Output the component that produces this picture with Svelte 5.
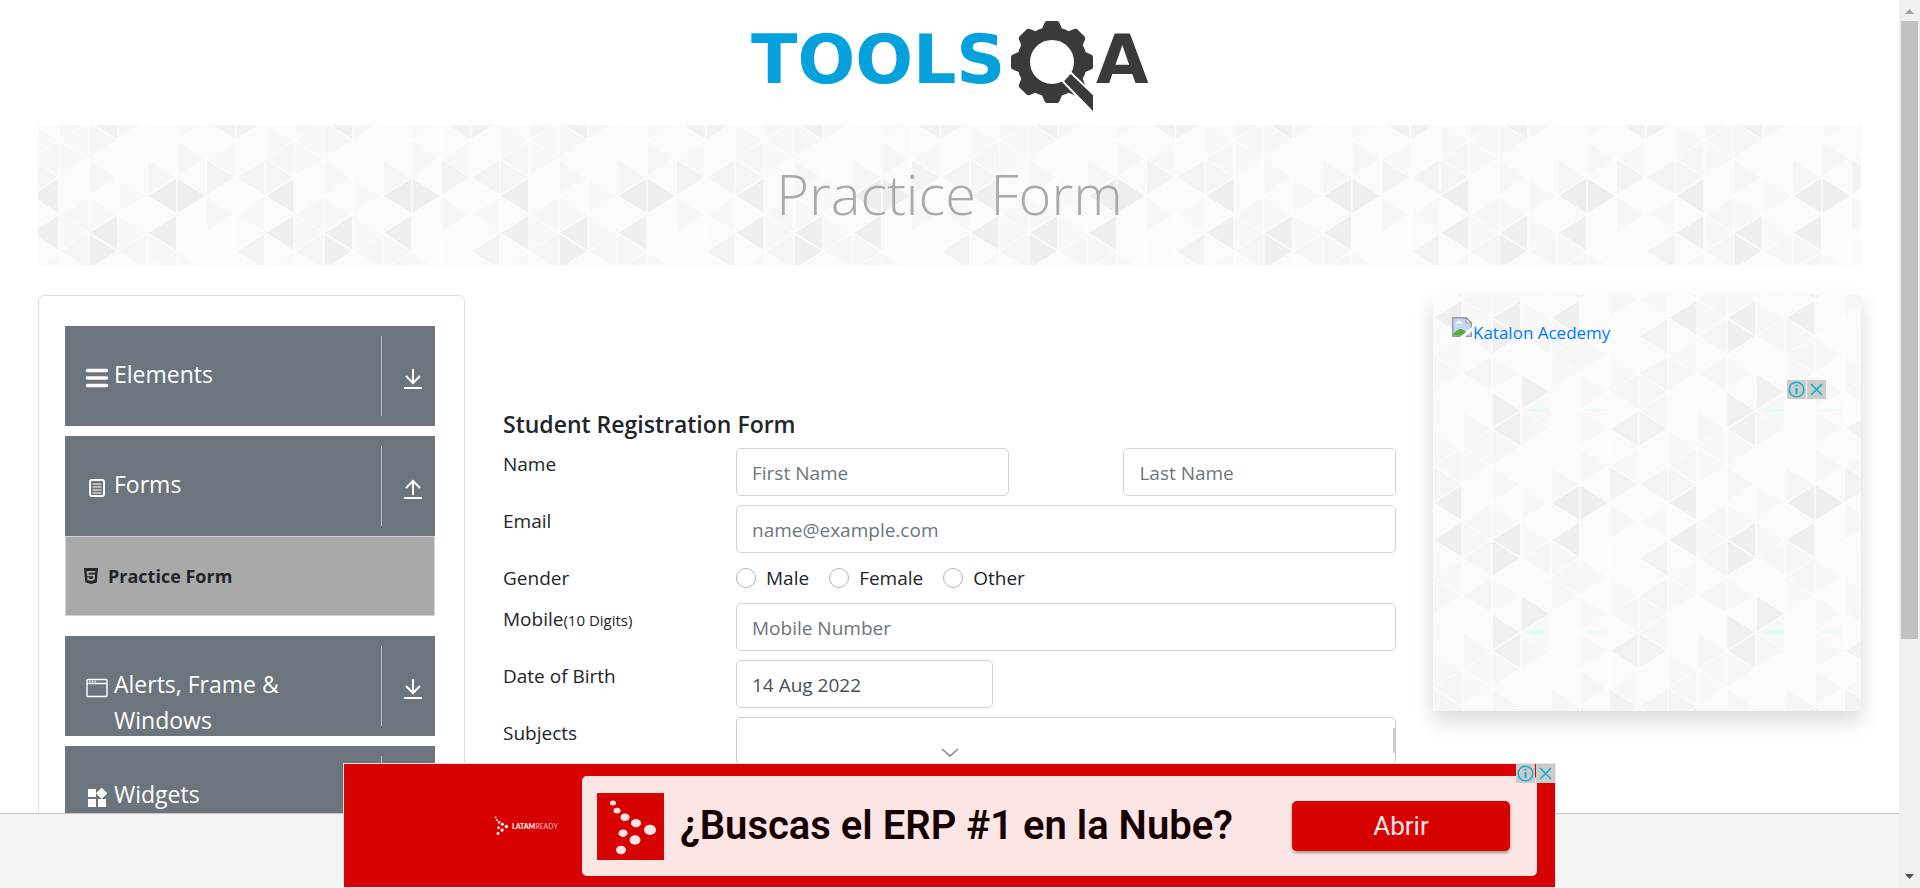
<script>
  const COL = 29.375;
  const SIDE = 37;
  const TILE_W = COL * 8;
  const TILE_H = SIDE * 6;

  // Accent shades, keyed by "column,half-row" inside one tile
  const accents = {
    '0,1': '#efefef', '2,1': '#efefef', '4,1': '#efefef', '2,2': '#efefef',
    '7,2': '#f3f3f3', '3,5': '#f0f0f0', '2,6': '#f0f0f0', '2,7': '#f0f0f0',
    '6,7': '#f2f2f2', '7,7': '#f2f2f2', '0,11': '#efefef', '4,11': '#eeeeee',
    '5,11': '#eeeeee', '6,10': '#f3f3f3', '7,10': '#f4f4f4', '0,10': '#f5f5f5',
    '7,4': '#f5f5f5', '1,4': '#f6f6f6', '4,10': '#f6f6f6', '1,2': '#f6f6f6'
  };
  const soft = ['#fbfbfb', '#f8f8f8', '#fafafa', '#f7f7f7', '#fafafa'];

  const triangles = [];
  for (let k = 0; k < 8; k++) {
    for (let j = -1; j < 13; j++) {
      const row = (j + 12) % 12;
      const cy = (0.12 + j * 0.5) * SIDE;
      const left = (j + k + 12) % 2 === 1;
      const apex = left ? k * COL : (k + 1) * COL;
      const edge = left ? (k + 1) * COL : k * COL;
      triangles.push({
        points: `${apex},${cy} ${edge},${cy - SIDE / 2} ${edge},${cy + SIDE / 2}`,
        fill: accents[`${k},${row}`] ?? soft[(k * 3 + row * 2 + ((k * row) % 3)) % 5]
      });
    }
  }

  const groups = [
    { name: 'Elements', icon: 'menu' },
    { name: 'Forms', icon: 'form', items: ['Practice Form'] },
    { name: 'Alerts, Frame & Windows', icon: 'window' },
    { name: 'Widgets', icon: 'widgets' }
  ];
  const genders = ['Male', 'Female', 'Other'];
  const dots = [
    [16, 12, 3], [20, 21, 3.5], [28, 29, 4.5], [39, 36, 5], [53, 44, 6],
    [26, 48, 4.5], [38, 56, 5.5], [24, 68, 5]
  ];
</script>

{#snippet pattern(id, x, y)}
  <svg class="pattern" width="100%" height="100%" aria-hidden="true">
    <defs>
      <pattern {id} {x} {y} width={TILE_W} height={TILE_H} patternUnits="userSpaceOnUse">
        <rect width={TILE_W} height={TILE_H} fill="#f9f9f9" />
        {#each triangles as t}
          <polygon points={t.points} fill={t.fill} stroke="#fcfcfc" stroke-width="1.6" />
        {/each}
        <ellipse cx="106" cy="115" rx="10" ry="1.5" fill="#defcf8" />
        <ellipse cx="163" cy="115" rx="12" ry="1.5" fill="#ecfbf8" />
      </pattern>
    </defs>
    <rect width="100%" height="100%" fill="url(#{id})" />
  </svg>
{/snippet}

{#snippet adMarks()}
  <div class="marks">
    <button type="button" aria-label="Ad information">
      <svg width="19" height="19" viewBox="0 0 19 19" fill="none" stroke="#12aecb" stroke-width="1.5">
        <circle cx="9.5" cy="9.5" r="7.3" />
        <path d="M9.5 8v6M9.5 4.8v1.8" stroke-width="2" />
      </svg>
    </button>
    <button type="button" aria-label="Close ad">
      <svg width="19" height="19" viewBox="0 0 19 19" fill="none" stroke="#12aecb" stroke-width="1.7">
        <path d="M4 4l11 11M15 4L4 15" />
      </svg>
    </button>
  </div>
{/snippet}

{#snippet latamDots(fill)}
  {#each dots as [cx, cy, r]}
    <circle {cx} {cy} {r} {fill} />
  {/each}
{/snippet}

<div class="window">
  <div class="page">
    <header>
      <a href="#home" aria-label="ToolsQA home">
        <svg width="440" height="125" viewBox="0 0 440 125">
          <text class="brand" x="21" y="83" fill="#04a1dd">TOOLS</text>
          <g transform="translate(322 62)" fill="#3a3a3a">
            <circle r="28.5" fill="none" stroke="#3a3a3a" stroke-width="13" />
            {#each [0, 45, 90, 135, 180, 225, 270, 315] as a}
              <path transform="rotate({a})" d="M-11 -31L-7.500 -39Q-7 -41 -5 -41H5Q7 -41 7.500 -39L11 -31Z" />
            {/each}
            <path
              d="M18.700 12L41 33.300V49L12 19.300Z"
              stroke="#fff" stroke-width="4" paint-order="stroke"
            />
          </g>
          <text class="brand" x="366" y="83" fill="#3a3a3a">A</text>
        </svg>
      </a>
    </header>

    <section class="banner">
      {@render pattern('banner-tiles', -8, 85)}
      <h1>Practice Form</h1>
    </section>

    <div class="columns">
      <nav class="menu" aria-label="Sections">
        {#each groups as g}
          <div class="group">
            <button type="button" class="group-head" aria-expanded={!!g.items}>
              <span class="group-icon">
                <svg width="24" height="24" viewBox="0 0 24 24" fill="none" stroke="#fff">
                  {#if g.icon === 'menu'}
                    <path d="M2.500 4.500h19M2.500 12h19M2.500 19.500h19" stroke-width="3.500" stroke-linecap="round" />
                  {:else if g.icon === 'form'}
                    <rect x="5" y="4" width="14" height="16" rx="2" stroke-width="2" />
                    <path d="M7.500 8h9M7.500 11h9M7.500 14h9M7.500 17h9" />
                  {:else if g.icon === 'window'}
                    <rect x="2" y="3.500" width="20" height="17" rx="1" stroke-width="1.400" />
                    <path d="M2 7.500h20M4 5.500h1.500M6.800 5.500h1.500M9.600 5.500h1.500" stroke-width="1.400" />
                  {:else}
                    <path
                      stroke="none" fill="#fff"
                      d="M13 13v8h8v-8h-8zM3 21h8v-8H3v8zM3 3v8h8V3H3zm13.660-1.310L11 7.340 16.660 13l5.660-5.660-5.660-5.650z"
                    />
                  {/if}
                </svg>
              </span>
              <span class="group-name">{g.name}</span>
              <span class="group-arrow">
                <svg width="18" height="20" viewBox="0 0 18 20" fill="none" stroke="#fff" stroke-width="2">
                  {#if g.items}
                    <path d="M9 16V2M2 9l7-7 7 7M0 19h18" />
                  {:else}
                    <path d="M9 0v14M2 7l7 7 7-7M0 19h18" />
                  {/if}
                </svg>
              </span>
            </button>
            {#if g.items}
              <ul>
                {#each g.items as item}
                  <li>
                    <a href="#practice-form" aria-current="page">
                      <svg width="16" height="16" viewBox="0 0 24 24" fill="#212529">
                        <path
                          d="M1.500 0h21l-1.910 21.563L11.977 24l-8.564-2.438L1.500 0zm7.031 9.750l-.232-2.718 10.059.003.230-2.622L5.412 4.410l.698 8.010h9.126l-.326 3.426-2.910.804-2.955-.810-.188-2.110H6.248l.330 4.171L12 19.351l5.379-1.443.744-8.157H8.531z"
                        />
                      </svg>
                      {item}
                    </a>
                  </li>
                {/each}
              </ul>
            {/if}
          </div>
        {/each}
      </nav>

      <main>
        <h2>Student Registration Form</h2>
        <form>
          <label for="first">Name</label>
          <div class="names">
            <input id="first" type="text" placeholder="First Name" />
            <input type="text" placeholder="Last Name" aria-label="Last Name" />
          </div>

          <label for="email">Email</label>
          <input id="email" type="email" placeholder="name@example.com" />

          <span id="gender-label" class="label">Gender</span>
          <div class="genders" role="radiogroup" aria-labelledby="gender-label">
            {#each genders as g}
              <label><input type="radio" name="gender" value={g} />{g}</label>
            {/each}
          </div>

          <label for="mobile">Mobile<small>(10 Digits)</small></label>
          <input id="mobile" type="tel" placeholder="Mobile Number" />

          <label for="dob">Date of Birth</label>
          <input id="dob" class="date" type="text" value="14 Aug 2022" />

          <label for="subjects">Subjects</label>
          <div class="subjects">
            <input id="subjects" type="text" />
            <span class="subjects-bar"></span>
          </div>
        </form>
      </main>

      <aside>
        {@render pattern('card-tiles', 0, 0)}
        <a class="katalon" href="#katalon">
          <svg width="20" height="20" viewBox="0 0 20 20" aria-hidden="true">
            <path d="M0.700 0.700H14L19.300 6V19.300H0.700Z" fill="#c6d6f5" stroke="#9a9a9a" stroke-width="1.400" />
            <path d="M4 6.500q0-2 2-2 1-1.500 2.500 0 2 .300 2 2Z" fill="#fff" />
            <path d="M1.400 18.600V17Q8 8 14 15l2 3.600Z" fill="#56aa38" />
            <path d="M14 0.700V6h5.300Z" fill="#fff" stroke="#9a9a9a" stroke-width="1.200" />
            <path d="M8 20L20 10v4L13 20Z" fill="#fff" />
          </svg>
          <span>Katalon Acedemy</span>
        </a>
        <div class="slot">{@render adMarks()}</div>
      </aside>
    </div>

    <footer></footer>

    <div class="ad-dock">
      <button type="button" class="collapse" aria-label="Collapse ad">
        <svg width="18" height="9" viewBox="0 0 18 9" fill="none" stroke="#888" stroke-width="1.600">
          <path d="M1 1l8 7 8-7" />
        </svg>
      </button>
      <div class="ad">
        <div class="ad-brand">
          <svg width="15" height="20" viewBox="10 8 52 68" aria-hidden="true">{@render latamDots('#fff')}</svg>
          <span><b>LATAM</b>READY</span>
        </div>
        <div class="ad-panel">
          <svg class="ad-tile" width="67" height="67" viewBox="0 0 67 80" preserveAspectRatio="none" aria-hidden="true">
            <rect width="67" height="80" fill="#d60302" />
            {@render latamDots('#fbe5e5')}
          </svg>
          <strong>¿Buscas el ERP #1 en la Nube?</strong>
          <button type="button" class="open">Abrir</button>
        </div>
        {@render adMarks()}
      </div>
    </div>
  </div>

  <div class="scroll" aria-hidden="true">
    <svg width="9" height="5" viewBox="0 0 9 5"><path d="M0 5L4.500 0 9 5Z" fill="#a3a3a3" /></svg>
    <div class="thumb"></div>
    <svg class="down" width="9" height="5" viewBox="0 0 9 5"><path d="M0 0H9L4.500 5Z" fill="#505050" /></svg>
  </div>
</div>

<style>
  :global(body) {
    margin: 0;
    background: #fff;
  }
  * {
    box-sizing: border-box;
  }
  .window {
    display: flex;
    height: 100vh;
    overflow: hidden;
    font-family: 'Open Sans', 'Noto Sans', sans-serif;
    font-size: 19px;
    line-height: 30px;
    color: #212529;
  }
  button {
    font: inherit;
    border: 0;
    padding: 0;
    background: none;
    cursor: pointer;
  }
  svg {
    display: block;
    flex: none;
  }
  .page {
    position: relative;
    flex: 1;
    min-width: 0;
    padding: 0 38px;
    overflow: hidden;
  }
  header {
    display: flex;
    justify-content: center;
  }
  .brand {
    font: 700 68px 'DejaVu Sans', sans-serif;
  }
  .pattern {
    position: absolute;
    inset: 0;
  }
  .banner {
    position: relative;
    display: flex;
    align-items: center;
    justify-content: center;
    height: 140px;
    padding-bottom: 4px;
  }
  h1 {
    position: relative;
    margin: 0;
    font-size: 56px;
    font-weight: 300;
    line-height: 72px;
    color: #aaa;
  }
  .columns {
    display: grid;
    grid-template-columns: 427fr 968fr 428fr;
    align-items: start;
    margin-top: 30px;
  }

  .menu {
    padding: 30px 29px 30px 26px;
    border: 1px solid #dfdfdf;
    border-radius: 6px;
  }
  .group {
    margin-bottom: 10px;
  }
  .group-head {
    display: flex;
    width: 100%;
    height: 100px;
    padding: 10px 0;
    overflow: hidden;
    background: #6c757d;
    color: #fff;
    text-align: left;
  }
  .group-icon {
    padding: 30px 5px 0 20px;
  }
  .group-name {
    flex: 1;
    padding: 20px 32px 0 0;
    font-size: 23px;
    line-height: 36px;
  }
  .group-arrow {
    width: 54px;
    height: 80px;
    padding: 33px 0 0 22px;
    border-left: 1px solid #b9bdc1;
  }
  ul {
    margin: 0 0 20px;
    padding: 0;
    list-style: none;
    background: #a9a9a9;
    border: 1px solid #ced4da;
  }
  li a {
    display: flex;
    align-items: center;
    gap: 9px;
    height: 78px;
    padding-left: 17px;
    color: #212529;
    font-size: 18px;
    font-weight: 700;
    text-decoration: none;
  }

  main {
    padding: 114px 37px 0 38px;
  }
  h2 {
    margin: 0 0 9px;
    font-size: 23px;
    font-weight: 600;
    line-height: 30px;
  }
  form {
    display: grid;
    grid-template-columns: 233fr 660fr;
    row-gap: 9px;
  }
  label,
  .label {
    line-height: 32px;
  }
  input {
    width: 100%;
    height: 48px;
    margin: 0;
    padding: 2px 15px 0;
    border: 1px solid #ced4da;
    border-radius: 5px;
    background: #fff;
    font: inherit;
    color: #495057;
  }
  input::placeholder {
    color: #6c757d;
    opacity: 1;
  }
  small {
    font-size: 15px;
  }
  .names {
    display: flex;
    justify-content: space-between;
  }
  .names input {
    width: 41.3%;
  }
  .genders {
    display: flex;
    gap: 20px;
    height: 32px;
  }
  .genders label {
    display: flex;
    gap: 10px;
  }
  .genders input {
    width: 20px;
    height: 20px;
    margin-top: 6px;
    padding: 0;
    appearance: none;
    border-color: #adb5bd;
    border-radius: 50%;
  }
  .date {
    width: 39%;
  }
  .subjects {
    position: relative;
  }
  .subjects input {
    border-color: #ccc;
  }
  .subjects-bar {
    position: absolute;
    top: 11px;
    right: 0;
    width: 3px;
    height: 25px;
    background: #ccc;
  }

  aside {
    position: relative;
    padding: 19px;
    box-shadow: 0 10px 20px rgba(0, 0, 0, 0.15);
  }
  .katalon {
    position: relative;
    display: flex;
    gap: 1px;
    height: 66px;
    padding-top: 3px;
    color: #007bff;
    font-size: 17px;
    line-height: 32px;
    text-decoration: none;
  }
  .slot {
    position: relative;
    width: 374px;
    height: 312px;
    max-width: 100%;
  }
  .marks {
    position: absolute;
    top: 0;
    right: 0;
    display: flex;
    gap: 1px;
  }
  .marks button {
    background: #ccc;
  }

  footer {
    position: absolute;
    inset: auto 0 0;
    height: 75px;
    border-top: 1px solid #c6c6c6;
    background: #f4f4f4;
  }
  .ad-dock {
    position: absolute;
    inset: auto 0 0;
    display: flex;
    flex-direction: column;
    align-items: center;
    gap: 6px;
  }
  .ad {
    position: relative;
    display: flex;
    width: 1213px;
    max-width: 100%;
    padding: 12px 18px 11px 150px;
    border: 1px solid #e4e4e4;
    background: #d60302;
  }
  .ad-brand {
    display: flex;
    flex: 1;
    align-items: center;
    gap: 3px;
    color: #f5bcbc;
    font-family: Lato, sans-serif;
    font-size: 7px;
    line-height: 10px;
  }
  .ad-brand b {
    color: #fff;
  }
  .ad-panel {
    display: flex;
    align-items: center;
    width: 955px;
    height: 100px;
    padding: 0 27px 0 15px;
    border-radius: 5px;
    background: #fbe5e5;
    font-family: Roboto, sans-serif;
  }
  strong {
    flex: 1;
    padding-left: 16px;
    color: #170000;
    font-size: 40px;
    font-weight: 600;
    line-height: 48px;
    white-space: nowrap;
  }
  .open {
    width: 218px;
    height: 50px;
    border-radius: 5px;
    background: #d60302;
    box-shadow: 0 2px 3px rgba(0, 0, 0, 0.35);
    color: #fbe5e5;
    font-size: 26px;
  }

  .scroll {
    display: flex;
    flex: none;
    flex-direction: column;
    align-items: center;
    width: 21px;
    padding: 9px 0;
    background: #f0f0f0;
  }
  .thumb {
    width: 17px;
    height: 71%;
    margin-top: 7px;
    background: #c1c1c1;
  }
  .down {
    margin-top: auto;
  }
</style>
